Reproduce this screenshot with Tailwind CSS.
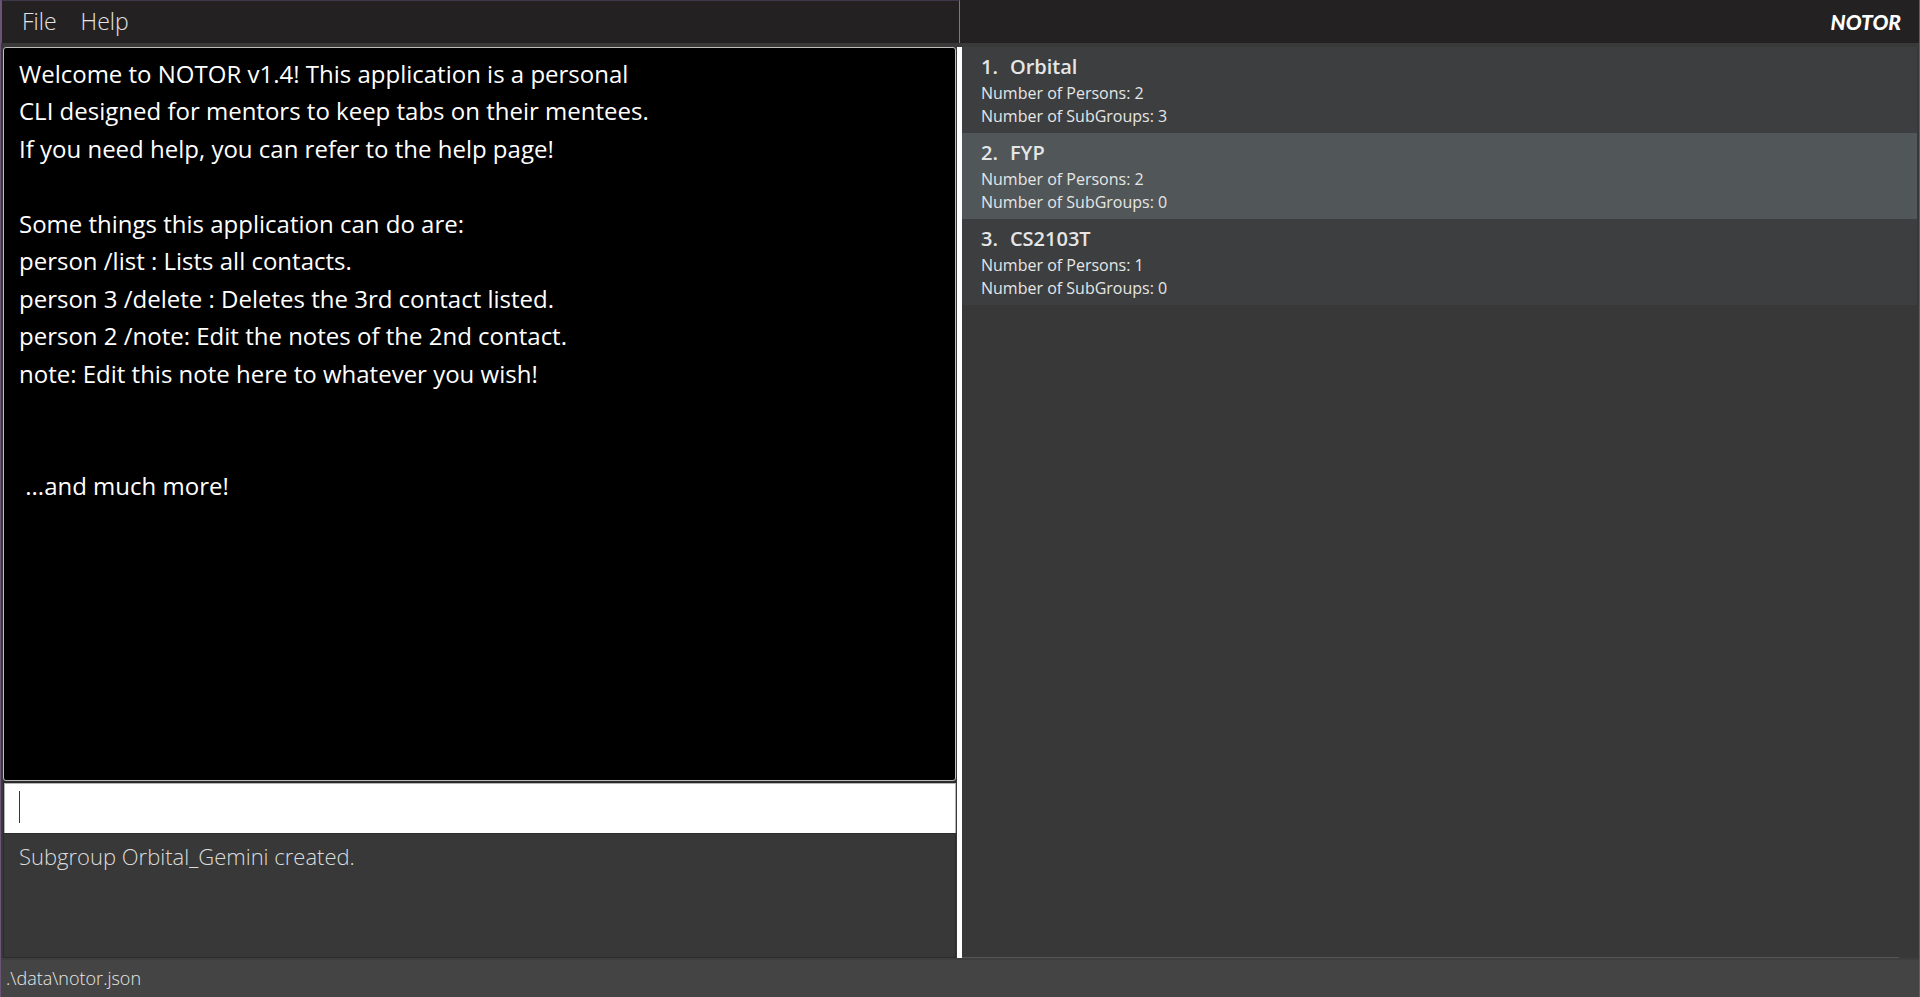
<!DOCTYPE html>
<html lang="en">
<head>
<meta charset="utf-8">
<title>NOTOR</title>
<script src="https://cdn.jsdelivr.net/npm/@tailwindcss/browser@4"></script>
</head>
<body class="flex h-screen flex-col overflow-hidden border-x border-[#6b5577] bg-[#3a393a] font-['Open_Sans',sans-serif] text-[#e8e8e8]">
  <header class="flex h-[43px] shrink-0 bg-[#242122]">
    <nav class="flex w-1/2 items-center gap-6 border-t border-r border-l border-t-[#40364a] border-r-[#8a6c9c] border-l-[#6b5577] pb-0.5 pl-5 text-[23px] leading-8 font-light text-[#e4e4e4]" aria-label="Menu">
      <button type="button">File</button>
      <button type="button">Help</button>
    </nav>
    <div class="flex flex-1 items-center justify-end pr-[18px]">
      <h1 class="font-['Lato',sans-serif] text-[21px] font-black text-white italic">NOTOR</h1>
    </div>
  </header>

  <main class="flex min-h-0 flex-1 pt-1">
    <div class="flex w-1/2 flex-col pl-0.5">
      <section class="flex min-h-0 flex-1 flex-col pr-1">
        <textarea aria-label="Note" class="min-h-0 w-full flex-1 resize-none rounded-[3px] border border-[#bdbcb6] bg-black px-[15px] pt-[7px] font-['Open_Sans',sans-serif] text-[24px] leading-[1.56] text-white outline-none" spellcheck="false">Welcome to NOTOR v1.4! This application is a personal
CLI designed for mentors to keep tabs on their mentees.
If you need help, you can refer to the help page!

Some things this application can do are:
person /list : Lists all contacts.
person 3 /delete : Deletes the 3rd contact listed.
person 2 /note: Edit the notes of the 2nd contact.
note: Edit this note here to whatever you wish!


 ...and much more!</textarea>
        <div class="relative h-[52px] shrink-0 bg-[#2b2b2d] pt-0.5 pl-px">
          <input type="text" aria-label="Command" class="block h-full w-full border-t border-r border-l border-[#b5b5b5] bg-white px-3.5 text-[22px] text-black outline-none">
          <span class="absolute top-[10px] left-4 h-8 w-px bg-[#383838]"></span>
        </div>
        <output class="block h-[125px] shrink-0 border border-[#2c2c2c] bg-[#383838] px-[15px] pt-1.5 text-[22px] leading-8 font-light text-[#dcdcdc]">Subgroup Orbital_Gemini created.</output>
      </section>
    </div>
    <div class="-ml-[3px] w-[5px] shrink-0 bg-white" role="separator" aria-orientation="vertical"></div>
    <section class="flex min-w-0 flex-1 flex-col bg-[#383838]" aria-label="Groups">
      <ol class="mr-0.5 flex-1 text-[16px] leading-[23px] text-[#e6e6e6]">
        <li class="h-[86px] bg-[#3c3e3f] pt-1.5 pl-[19px]">
          <h2 class="mb-0.5 flex gap-3 text-[20px] leading-[27px] font-semibold"><span>1.</span><span>Orbital</span></h2>
          <p>Number of Persons: 2</p>
          <p>Number of SubGroups: 3</p>
        </li>
        <li class="h-[86px] bg-[#515658] pt-1.5 pl-[19px]">
          <h2 class="mb-0.5 flex gap-3 text-[20px] leading-[27px] font-semibold"><span>2.</span><span>FYP</span></h2>
          <p>Number of Persons: 2</p>
          <p>Number of SubGroups: 0</p>
        </li>
        <li class="h-[86px] bg-[#3c3e3f] pt-1.5 pl-[19px]">
          <h2 class="mb-0.5 flex gap-3 text-[20px] leading-[27px] font-semibold"><span>3.</span><span>CS2103T</span></h2>
          <p>Number of Persons: 1</p>
          <p>Number of SubGroups: 0</p>
        </li>
      </ol>
      <div class="mr-5 h-px bg-[#555555]"></div>
    </section>
  </main>

  <footer class="flex h-[39px] shrink-0 items-center border-t-2 border-[#3e3e3e] bg-[#444444] pl-[5px] text-[18px] font-light">.\data\notor.json</footer>
</body>
</html>
